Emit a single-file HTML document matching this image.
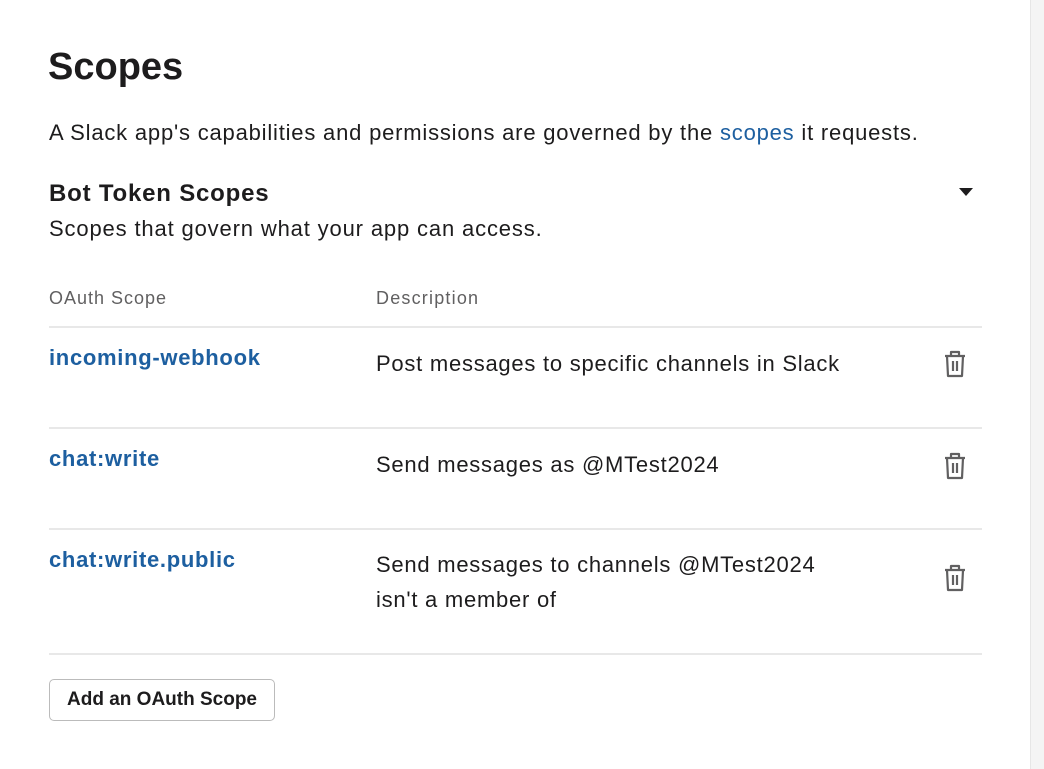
<!DOCTYPE html>
<html><head><style>
body{margin:0;width:1044px;height:769px;background:#fff;font-family:"Liberation Sans",sans-serif;color:#1d1c1d;position:relative;overflow:hidden}
.a{position:absolute;white-space:nowrap}
.strip{position:absolute;left:1030px;top:0;width:14px;height:769px;background:#f4f4f4;border-left:1px solid #e6e6e6}
.line{position:absolute;left:49px;width:933px;height:2px;background:#e8e8e8}
.sc{font-size:22px;font-weight:bold;color:#1d5fa0;letter-spacing:.7px}
.d{font-size:22px;letter-spacing:.75px}
.tr{position:absolute;left:943px}
</style></head><body>
<div class="strip"></div>
<div class="a" style="left:48px;top:46px;font-size:38px;font-weight:bold">Scopes</div>
<div class="a" style="left:49px;top:120px;font-size:22px;letter-spacing:.8px">A Slack app's capabilities and permissions are governed by the <span style="color:#1d5fa0">scopes</span> it requests.</div>
<div class="a" style="left:49px;top:180px;font-size:24px;font-weight:bold;letter-spacing:.8px">Bot Token Scopes</div>
<svg class="a" style="left:958px;top:187px" width="16" height="10"><path d="M1 1H15L8 9Z" fill="#1d1c1d"/></svg>
<div class="a" style="left:49px;top:216px;font-size:22px;letter-spacing:.85px">Scopes that govern what your app can access.</div>
<div class="a" style="left:49px;top:288px;font-size:18px;color:#616061;letter-spacing:1px">OAuth Scope</div>
<div class="a" style="left:376px;top:288px;font-size:18px;color:#616061;letter-spacing:1.2px">Description</div>
<div class="line" style="top:326px"></div>
<div class="line" style="top:427px"></div>
<div class="line" style="top:528px"></div>
<div class="line" style="top:653px"></div>
<div class="a sc" style="left:49px;top:345px">incoming-webhook</div>
<div class="a d" style="left:376px;top:351px">Post messages to specific channels in Slack</div>
<div class="a sc" style="left:49px;top:446px">chat:write</div>
<div class="a d" style="left:376px;top:452px">Send messages as @MTest2024</div>
<div class="a sc" style="left:49px;top:547px">chat:write.public</div>
<div class="a d" style="left:376px;top:547px;line-height:35px">Send messages to channels @MTest2024<br>isn't a member of</div>
<svg class="tr" style="top:350px" width="24" height="28" viewBox="0 0 24 28"><g fill="none" stroke="#616061" stroke-width="2.2" stroke-linejoin="round"><path d="M2 6H22M8 6V2H16V6M4 6L5 26H19L20 6M10 11V21M14 11V21"/></g></svg>
<svg class="tr" style="top:452px" width="24" height="28" viewBox="0 0 24 28"><g fill="none" stroke="#616061" stroke-width="2.2" stroke-linejoin="round"><path d="M2 6H22M8 6V2H16V6M4 6L5 26H19L20 6M10 11V21M14 11V21"/></g></svg>
<svg class="tr" style="top:564px" width="24" height="28" viewBox="0 0 24 28"><g fill="none" stroke="#616061" stroke-width="2.2" stroke-linejoin="round"><path d="M2 6H22M8 6V2H16V6M4 6L5 26H19L20 6M10 11V21M14 11V21"/></g></svg>
<div class="a" style="left:49px;top:679px;width:224px;height:40px;border:1px solid #bbb;border-radius:5px;font-size:19px;font-weight:bold;line-height:40px;text-align:center">Add an OAuth Scope</div>
</body></html>
